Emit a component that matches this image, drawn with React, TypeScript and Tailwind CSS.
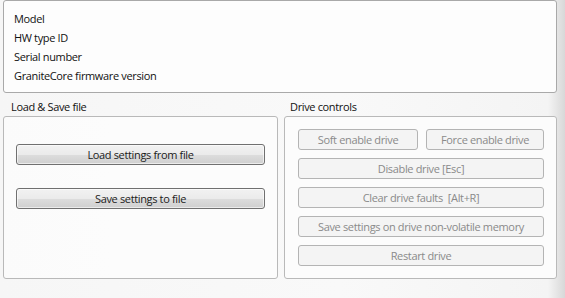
import React from 'react';

const font = { fontFamily: '"Open Sans", "Noto Sans", "Liberation Sans", sans-serif' };

const infoRows = ['Model', 'HW type ID', 'Serial number', 'GraniteCore firmware version'];

const ActiveButton = ({ label }: { label: string }) => (
    <button className="h-[21px] w-full rounded-[3px] border border-[#707070] bg-[linear-gradient(to_bottom,#f2f2f2_0%,#ebebeb_50%,#dddddd_51%,#cfcfcf_100%)] text-[11px] leading-none tracking-[-0.35px] text-[#1a1a1a] shadow-[inset_0_0_0_1px_rgba(255,255,255,0.6)]">
        {label}
    </button>
);

const DisabledButton = ({ label, className = '' }: { label: string; className?: string }) => (
    <button
        disabled
        className={`h-[21px] rounded-[3px] border border-[#b4b4b4] bg-[#f4f4f4] text-[11px] leading-none tracking-[-0.35px] text-[#8a8a8a] ${className}`}
    >
        {label}
    </button>
);

const App = () => {
    return (
        <div
            style={font}
            className="w-[565px] h-[298px] overflow-hidden pl-[3px] pr-[8px] bg-[linear-gradient(to_right,#f6f6f6_0%,#f9f9f9_60%,#f4f4f4_97%,#d8d8d8_100%)] flex flex-col tracking-[-0.35px]"
        >
            {/* Device info */}
            <div className="h-[93px] shrink-0 rounded-[3px] border border-[#a9a9a9] bg-[#fdfdfd] pl-[10px] pt-[8px]">
                {infoRows.map((row) => (
                    <div key={row} className="h-[19px] text-[11px] leading-[19px] text-[#111111]">
                        {row}
                    </div>
                ))}
            </div>

            {/* Group labels */}
            <div className="h-[23px] shrink-0 flex text-[11px] leading-[27px] text-[#111111]">
                <div className="w-[281px] pl-[8px]">Load &amp; Save file</div>
                <div className="pl-[6px]">Drive controls</div>
            </div>

            <div className="h-[163px] shrink-0 flex gap-[6px]">
                {/* Load & Save file */}
                <div className="w-[275px] rounded-[3px] border border-[#b9b9b9] bg-[#fcfcfc]/90 px-[12px] pt-[27px] flex flex-col gap-[23px]">
                    <ActiveButton label="Load settings from file" />
                    <ActiveButton label="Save settings to file" />
                </div>

                {/* Drive controls */}
                <div className="flex-1 rounded-[3px] border border-[#b9b9b9] bg-[#fcfcfc] pl-[13px] pr-[12px] pt-[12px] flex flex-col gap-[8px]">
                    <div className="flex gap-[8px]">
                        <DisabledButton label="Soft enable drive" className="w-[120px]" />
                        <DisabledButton label="Force enable drive" className="flex-1" />
                    </div>
                    <DisabledButton label="Disable drive [Esc]" className="w-full" />
                    <DisabledButton label="Clear drive faults  [Alt+R]" className="w-full whitespace-pre" />
                    <DisabledButton label="Save settings on drive non-volatile memory" className="w-full" />
                    <DisabledButton label="Restart drive" className="w-full" />
                </div>
            </div>
        </div>
    );
};

export default App;
